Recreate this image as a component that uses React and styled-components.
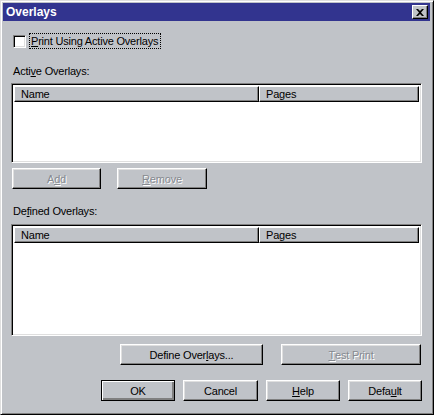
import styled, { createGlobalStyle } from "styled-components";

const Global = createGlobalStyle`
  html, body { margin: 0; padding: 0; background: #c0c3c8; }
  body { font-family: "Liberation Sans", Arial, sans-serif; }
`;

const Window = styled.div`
  box-sizing: border-box;
  width: 434px;
  height: 415px;
  background: #c0c3c8;
  border: 1px solid;
  border-color: #dfdfdf #000 #000 #dfdfdf;
  box-shadow: inset 1px 1px #fff, inset -1px -1px #808080;
  padding: 2px 3px 2px 2px;
  display: flex;
  flex-direction: column;
  font-size: 11px;
  letter-spacing: -0.2px;
  color: #000;
`;

const TitleBar = styled.div`
  height: 18px;
  background: #32348f;
  display: flex;
  align-items: center;
  justify-content: space-between;
  padding: 0 2px 0 3px;
`;

const Title = styled.span`
  color: #fff;
  font-weight: bold;
  font-size: 12px;
  letter-spacing: 0;
`;

const CloseBtn = styled.div`
  box-sizing: border-box;
  width: 16px;
  height: 14px;
  background: #c0c3c8;
  border: 1px solid;
  border-color: #fff #000 #000 #fff;
  box-shadow: inset -1px -1px #808080;
  display: flex;
  align-items: center;
  justify-content: center;
`;

const Body = styled.div`
  flex: 1;
  display: flex;
  flex-direction: column;
  padding: 12px 8px 0 8px;
`;

const CheckRow = styled.label`
  display: flex;
  align-items: center;
  gap: 4px;
  padding-left: 2px;
  height: 16px;
`;

const Box = styled.span`
  box-sizing: border-box;
  width: 13px;
  height: 13px;
  background: #fff;
  border: 1px solid;
  border-color: #808080 #fff #fff #808080;
  box-shadow: inset 1px 1px #000, inset -1px -1px #dfdfdf;
`;

const Focus = styled.span`
  outline: 1px dotted #000;
  padding: 1px 2px 1px 1px;
`;

const GroupLabel = styled.div`
  margin: ${(p) => p.$top}px 0 0 2px;
  height: 13px;
  line-height: 13px;
`;

const ListBox = styled.div`
  box-sizing: border-box;
  height: ${(p) => p.$h}px;
  margin-top: ${(p) => p.$top}px;
  background: #fff;
  border: 1px solid;
  border-color: #808080 #fff #fff #808080;
  box-shadow: inset 1px 1px #000, inset -1px -1px #dfdfdf;
  padding: 2px 2px 2px 2px;
`;

const Header = styled.div`
  display: flex;
  height: 16px;
`;

const HeadCell = styled.div`
  box-sizing: border-box;
  width: ${(p) => (p.$w ? `${p.$w}px` : "auto")};
  flex: ${(p) => (p.$w ? "none" : 1)};
  background: #c0c3c8;
  border: 1px solid;
  border-color: #fff #000 #000 #fff;
  box-shadow: inset -1px -1px #808080;
  padding-left: 6px;
  line-height: 14px;
`;

const Row = styled.div`
  display: flex;
  justify-content: ${(p) => p.$justify || "flex-start"};
  gap: ${(p) => p.$gap}px;
  margin-top: ${(p) => p.$top}px;
  padding: ${(p) => p.$pad || "0"};
`;

const Button = styled.div`
  box-sizing: border-box;
  width: ${(p) => p.$w}px;
  height: 21px;
  display: flex;
  align-items: center;
  justify-content: center;
  border: 1px solid;
  border-color: ${(p) => (p.$default ? "#000" : "#fff #000 #000 #fff")};
  box-shadow: ${(p) =>
    p.$default
      ? "inset 1px 1px #fff, inset -2px -2px #808080, inset -1px -1px #000"
      : "inset -1px -1px #808080, inset 1px 1px #dfdfdf"};
  color: ${(p) => (p.$disabled ? "#868a90" : "#000")};
  text-shadow: ${(p) => (p.$disabled ? "1px 1px #fff" : "none")};
`;

function ListView({ h, top }) {
  return (
    <ListBox $h={h} $top={top}>
      <Header>
        <HeadCell $w={245}>Name</HeadCell>
        <HeadCell>Pages</HeadCell>
      </Header>
    </ListBox>
  );
}

export default function App() {
  return (
    <>
      <Global />
      <Window>
        <TitleBar>
          <Title>Overlays</Title>
          <CloseBtn>
            <svg width="8" height="7" viewBox="0 0 8 7">
              <path d="M0 0h2l2 2 2-2h2L5 3.5 8 7H6L4 5 2 7H0l3-3.5z" fill="#000" />
            </svg>
          </CloseBtn>
        </TitleBar>
        <Body>
          <CheckRow>
            <Box />
            <Focus>
              <u>P</u>rint Using Active Overlays
            </Focus>
          </CheckRow>
          <GroupLabel $top={16}>
            Acti<u>v</u>e Overlays:
          </GroupLabel>
          <ListView h={80} top={5} />
          <Row $gap={16} $top={5} $pad="0 0 0 1px">
            <Button $w={89} $disabled>
              A<u>d</u>d
            </Button>
            <Button $w={90} $disabled>
              <u>R</u>emove
            </Button>
          </Row>
          <GroupLabel $top={16}>
            De<u>f</u>ined Overlays:
          </GroupLabel>
          <ListView h={112} top={6} />
          <Row $gap={18} $top={8} $justify="flex-end" $pad="0 1px 0 0">
            <Button $w={143}>
              Define Over<u>l</u>ays...
            </Button>
            <Button $w={140} $disabled>
              <u>T</u>est Print
            </Button>
          </Row>
          <Row $gap={8} $top={15} $justify="flex-end" $pad="0 0 0 0">
            <Button $w={74} $default>
              OK
            </Button>
            <Button $w={75}>Cancel</Button>
            <Button $w={74}>
              <u>H</u>elp
            </Button>
            <Button $w={74}>
              Defa<u>u</u>lt
            </Button>
          </Row>
        </Body>
      </Window>
    </>
  );
}
